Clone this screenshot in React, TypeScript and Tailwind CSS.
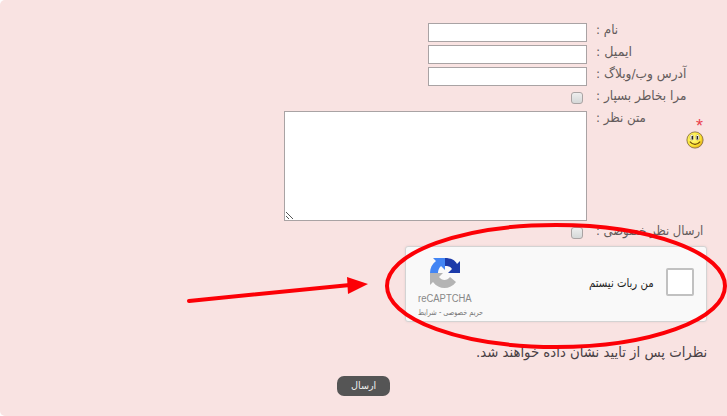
import { useLayoutEffect, useRef, useState } from "react";

type FitProps = { text: string; width: number; dir?: "rtl" | "ltr"; className?: string };

/* A single line of text squeezed or stretched to a fixed width. */
function Fit({ text, width, dir = "rtl", className = "" }: FitProps) {
  const ref = useRef<HTMLSpanElement>(null);
  const [scale, setScale] = useState(1);
  useLayoutEffect(() => {
    if (ref.current) setScale(width / ref.current.offsetWidth);
  }, [width, text]);
  return (
    <span dir="ltr" className={`block shrink-0 whitespace-nowrap ${className}`} style={{ width }}>
      <span
        ref={ref}
        dir={dir}
        className="inline-block origin-left"
        style={{ transform: `scaleX(${scale})` }}
      >
        {text}
      </span>
    </span>
  );
}

const label = "text-[13px] leading-[16px] text-[#635b5b]";

function Check() {
  return (
    <span className="mr-1 block h-[12px] w-[12px] rounded-[3px] border border-[#aaa3a3] bg-linear-to-b from-[#eeeeee] to-[#d5d8d8]" />
  );
}

function Field({ text, width }: { text: string; width: number }) {
  return (
    <div className="flex h-[22px] items-start">
      <div className="ml-[428px] mr-[9px] mt-px h-[19px] w-[159px] border border-[#a9a3a4] bg-white" />
      <Fit text={text} width={width} className={label} />
    </div>
  );
}

function Smiley() {
  return (
    <svg width="18" height="18" viewBox="0 0 18 18">
      <defs>
        <radialGradient id="face" cx="0.4" cy="0.4" r="0.65">
          <stop offset="0" stopColor="#fffb90" />
          <stop offset="0.65" stopColor="#fdea38" />
          <stop offset="1" stopColor="#e5a712" />
        </radialGradient>
      </defs>
      <circle cx="9" cy="9" r="8.1" fill="url(#face)" stroke="#8a7348" strokeWidth=".9" />
      <ellipse cx="5.8" cy="6.4" rx="1.8" ry="2.8" fill="#fff" stroke="#a58c30" strokeWidth=".5" />
      <ellipse cx="11.6" cy="6.4" rx="1.8" ry="2.8" fill="#fff" stroke="#a58c30" strokeWidth=".5" />
      <path d="M6.3 5v3.4M11.4 5v3.4" stroke="#222" strokeWidth="1.5" />
      <path d="M3.8 10.6Q9 16.2 14.2 10.6" fill="none" stroke="#6a430a" strokeWidth="1.1" />
    </svg>
  );
}

function RecaptchaLogo() {
  return (
    <svg width="32" height="32" viewBox="0 0 32 32">
      <path d="M16 1C22 1 26 3 28 7L31 4V16H19L23 12C21 9 19 9 16 9Z" fill="#1c3aa9" />
      <path d="M16 1H4L7 4C3 7 1 11 1 16H9C9 13 10 11 12 9L16 13Z" fill="#4285f4" />
      <path d="M1 16V28L4 25C10 33 21 33 27 25L21 20C18 24 13 24 10 20L14 16Z" fill="#b4b4b4" />
    </svg>
  );
}

export default function App() {
  return (
    <div className="h-[416px] w-[727px] bg-white font-['DejaVu_Sans',sans-serif]">
      <main className="relative flex h-[416px] w-[727px] flex-col overflow-hidden rounded-l-[5px] bg-[#f9e3e2] pt-[22px]">
        <Field text="نام :" width={22} />
        <Field text="ایمیل :" width={36} />
        <Field text="آدرس وب/وبلاگ :" width={90} />
        <div className="flex h-[22px] items-start pl-[571px]">
          <div className="mr-[9px] mt-[4px]"><Check /></div>
          <Fit text="مرا بخاطر بسپار :" width={90} className={label} />
        </div>
        <div className="flex h-[113px] items-start pl-[284px]">
          <div className="mr-[9px] mt-px flex h-[110px] w-[303px] items-end border border-[#a9a3a4] bg-white">
            <svg width="10" height="10" viewBox="0 0 10 10" stroke="#555" strokeWidth="1">
              <path d="M1 2l7 7M1 6l3 3" />
            </svg>
          </div>
          <Fit text="متن نظر :" width={50} className={label} />
          <div className="ml-[40px] flex flex-col items-end">
            <span className="mr-px mt-[4px] h-[17px] font-['Liberation_Sans',sans-serif] text-[18px] leading-[24px] text-[#ea404d]">*</span>
            <Smiley />
          </div>
        </div>
        <div className="flex h-[23px] items-start pl-[571px]">
          <div className="mr-[9px] mt-[4px]"><Check /></div>
          <Fit text="ارسال نظر خصوصی :" width={107} className={label} />
        </div>
        <section className="ml-[405px] flex h-[76px] w-[302px] shrink-0 items-start rounded-[3px] border border-[#d3d3d3] bg-[#f9f9f9] shadow-[0_0_3px_rgba(0,0,0,0.08)]">
          <div className="ml-[12px] mt-[10px] flex w-[66px] flex-col">
            <div className="ml-[11px] h-[32px]"><RecaptchaLogo /></div>
            <Fit text="reCAPTCHA" dir="ltr" width={54} className="mt-[3px] font-['Liberation_Sans',sans-serif] text-[10px] leading-[13px] text-[#888]" />
            <Fit text="حریم خصوصی - شرایط" width={65} className="mt-[1px] text-[8px] leading-[13px] text-[#777]" />
          </div>
          <Fit text="من ربات نیستم" width={65} className="ml-[105px] mt-[27px] text-[12px] leading-[18px] text-[#222]" />
          <div className="ml-[12px] mt-[21px] h-[28px] w-[28px] rounded-[2px] border-2 border-[#c1c1c1] bg-white" />
        </section>
        <div className="ml-[476px] mt-[19px]">
          <Fit text="نظرات پس از تایید نشان داده خواهند شد." width={231} className="text-[14px] leading-[22px] text-[#484044]" />
        </div>
        <button className="ml-[337px] mt-[13px] flex h-[20px] w-[53px] items-center justify-center rounded-[7px] bg-[#555]">
          <Fit text="ارسال" width={25} className="text-[10px] leading-[16px] text-[#eee]" />
        </button>
        <svg className="pointer-events-none absolute inset-0" width="727" height="416" viewBox="0 0 727 416">
          <ellipse cx="556" cy="286" rx="169" ry="61" fill="none" stroke="#fc0006" strokeWidth="4" />
          <path d="M189 301L350 285" stroke="#fc0006" strokeWidth="4" strokeLinecap="round" />
          <path d="M347 277L368 284L348 294Z" fill="#fc0006" />
        </svg>
      </main>
    </div>
  );
}
